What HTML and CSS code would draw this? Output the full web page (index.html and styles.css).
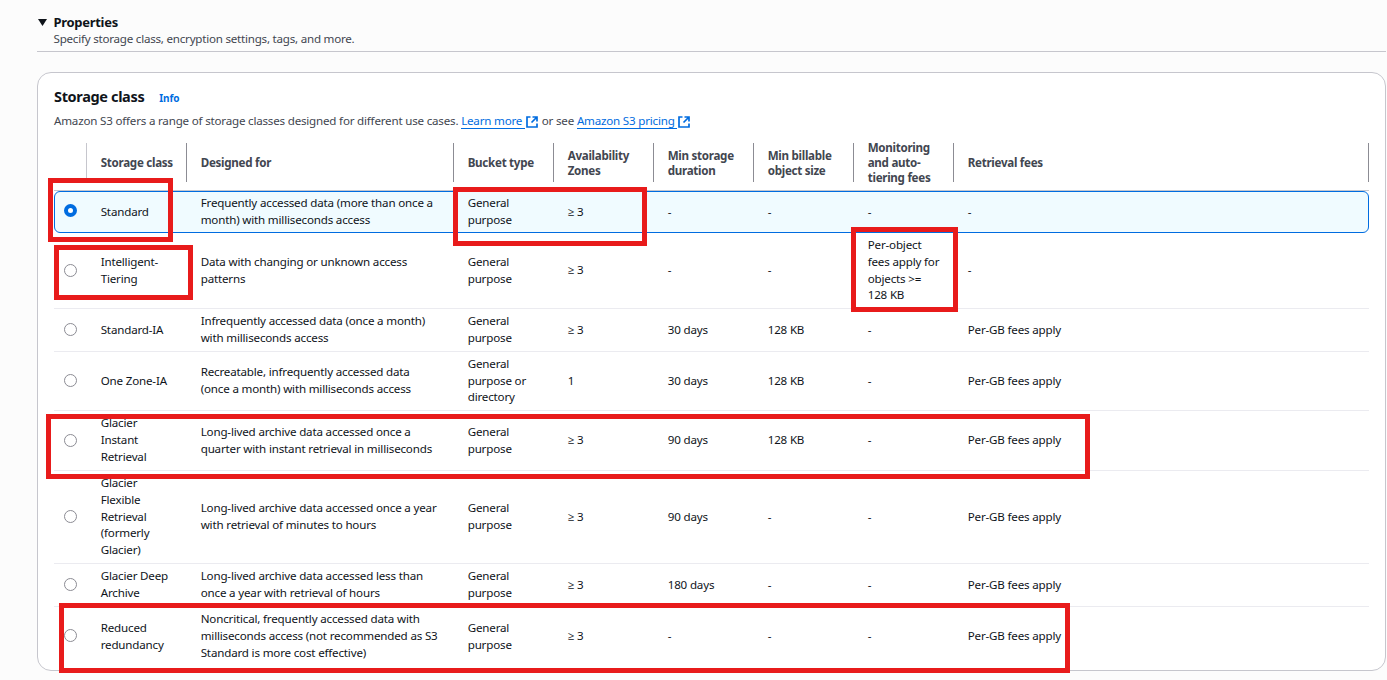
FILE: index.html
```html
<!DOCTYPE html>
<html lang="en">
<head>
<meta charset="utf-8">
<title>Storage class</title>
<link rel="stylesheet" href="styles.css">
</head>
<body>
<svg width="0" height="0" class="defs"><symbol id="external" viewBox="0 0 12 12"><path d="M4.500 1H1v10h10V7.500M6.500 1H11v4.500M11 1L5.500 6.500" fill="none" stroke="currentColor" stroke-width="1.700"/></symbol></svg>
<main class="page">
  <header class="section-head">
    <svg class="caret" viewBox="0 0 9 7"><path d="M0 0h9L4.500 7z"/></svg>
    <div>
      <h2 class="section-title">Properties</h2>
      <p class="section-desc">Specify storage class, encryption settings, tags, and more.</p>
    </div>
  </header>
  <section class="card">
    <div class="card-head"><h1 class="card-title">Storage class</h1><a class="info">Info</a></div>
    <p class="card-desc">Amazon S3 offers a range of storage classes designed for different use cases. <a class="link"><span>Learn more&nbsp;</span><svg><use href="#external"/></svg></a> or see <a class="link"><span>Amazon S3 pricing&nbsp;</span><svg><use href="#external"/></svg></a></p>
    <div class="table">
      <div class="row head">
        <div class="first"></div><div>Storage class</div><div>Designed for</div><div>Bucket type</div><div>Availability<br>Zones</div><div>Min storage<br>duration</div><div>Min billable<br>object size</div><div>Monitoring<br>and auto-<br>tiering fees</div><div>Retrieval fees</div>
      </div>
      <div class="row selected">
        <i class="radio on"></i><div>Standard</div><div>Frequently accessed data (more than once a<br>month) with milliseconds access</div><div>General<br>purpose</div><div>≥ 3</div><div>-</div><div>-</div><div>-</div><div>-</div>
      </div>
      <div class="row r2">
        <i class="radio"></i><div>Intelligent-<br>Tiering</div><div>Data with changing or unknown access<br>patterns</div><div>General<br>purpose</div><div>≥ 3</div><div>-</div><div>-</div><div>Per-object<br>fees apply for<br>objects &gt;=<br>128 KB</div><div>-</div>
      </div>
      <div class="row r3">
        <i class="radio"></i><div>Standard-IA</div><div>Infrequently accessed data (once a month)<br>with milliseconds access</div><div>General<br>purpose</div><div>≥ 3</div><div>30 days</div><div>128 KB</div><div>-</div><div>Per-GB fees apply</div>
      </div>
      <div class="row r4">
        <i class="radio"></i><div>One Zone-IA</div><div>Recreatable, infrequently accessed data<br>(once a month) with milliseconds access</div><div>General<br>purpose or<br>directory</div><div>1</div><div>30 days</div><div>128 KB</div><div>-</div><div>Per-GB fees apply</div>
      </div>
      <div class="row r5">
        <i class="radio"></i><div>Glacier<br>Instant<br>Retrieval</div><div>Long-lived archive data accessed once a<br>quarter with instant retrieval in milliseconds</div><div>General<br>purpose</div><div>≥ 3</div><div>90 days</div><div>128 KB</div><div>-</div><div>Per-GB fees apply</div>
      </div>
      <div class="row r6">
        <i class="radio"></i><div>Glacier<br>Flexible<br>Retrieval<br>(formerly<br>Glacier)</div><div>Long-lived archive data accessed once a year<br>with retrieval of minutes to hours</div><div>General<br>purpose</div><div>≥ 3</div><div>90 days</div><div>-</div><div>-</div><div>Per-GB fees apply</div>
      </div>
      <div class="row r7">
        <i class="radio"></i><div>Glacier Deep<br>Archive</div><div>Long-lived archive data accessed less than<br>once a year with retrieval of hours</div><div>General<br>purpose</div><div>≥ 3</div><div>180 days</div><div>-</div><div>-</div><div>Per-GB fees apply</div>
      </div>
      <div class="row r8">
        <i class="radio"></i><div>Reduced<br>redundancy</div><div>Noncritical, frequently accessed data with<br>milliseconds access (not recommended as S3<br>Standard is more cost effective)</div><div>General<br>purpose</div><div>≥ 3</div><div>-</div><div>-</div><div>-</div><div>Per-GB fees apply</div>
      </div>
    </div>
  </section>
</main>
<div class="mark mark-standard"></div>
<div class="mark mark-tiering"></div>
<div class="mark mark-zones"></div>
<div class="mark mark-fees"></div>
<div class="mark mark-instant"></div>
<div class="mark mark-reduced"></div>
</body>
</html>
```
FILE: styles.css
```css
* { box-sizing: border-box; }
body { margin: 0; height: 680px; overflow: hidden; background: #fcfcfc; font: 11.600px/16.8px "Noto Sans", "Open Sans", sans-serif; color: #0f141a; letter-spacing: -0.18px; }
h1, h2, p { margin: 0; }
.defs { display: block; }
.page { padding: 14px 1px 0 37px; }
.section-head { display: flex; height: 38px; border-bottom: 1px solid #c6c6cd; }
.caret { width: 9px; height: 7px; margin: 5px 6.500px 0 1px; fill: #0f141a; }
.section-title { font-size: 13px; line-height: 17px; font-weight: 700; letter-spacing: -0.3px; }
.section-desc { line-height: 16px; color: #424650; letter-spacing: -0.23px; }
.card { height: 599px; margin-top: 20px; padding: 14px 16px 0; background: #fff; border: 1px solid #c6c6cd; border-radius: 14px; }
.card-head { display: flex; align-items: baseline; height: 25px; }
.card-title { font-size: 14.500px; line-height: 18px; letter-spacing: -0.35px; }
.info { margin-left: 15px; color: #006ce0; font-size: 10px; font-weight: 700; letter-spacing: -0.1px; }
.card-desc { height: 29px; line-height: 18px; color: #424650; white-space: nowrap; letter-spacing: -0.2px; }
.link { color: #006ce0; margin-right: 1px; }
.link span { border-bottom: 1px solid #006ce0; }
.link svg { width: 12px; height: 12px; margin-left: 1px; vertical-align: -3px; }
.row { display: grid; grid-template-columns: 33px 100px 267px repeat(5, 100px) 1fr; align-items: center; border-bottom: 1px solid #ebebf0; white-space: nowrap; }
.row > div { padding: 0.2px 0 0 13.700px; }
.head { height: 50px; padding: 2px 0 9px; border-bottom-color: #c6c6cd; color: #424650; font-weight: 700; line-height: 15px; letter-spacing: -0.28px; }
.head > div { display: flex; align-items: center; height: 39px; border-right: 1px solid #8c8c94; }
.row.head > div { padding-top: 0; }
.head > .first { border-color: #c6c6cd; }
.selected { height: 42px; background: #f0fbff; border: 1px solid #006ce0; border-radius: 6px; grid-template-columns: 32px 100px 267px repeat(5, 100px) 1fr; }
.r2 { height: 76px; }
.r3, .r7 { height: 43px; }
.r4 { height: 59px; }
.r5 { height: 60px; }
.r6 { height: 93px; }
.r8 { height: 59px; border: 0; }
.radio { width: 13px; height: 13px; margin: 0 0 1px 10px; border: 1px solid #8c8c94; border-radius: 50%; background: #fff; }
.selected .radio { margin: 0 0 3px 9px; }
.r8 .radio { margin-bottom: 2px; }
.radio.on { border: 4px solid #006ce0; }
.mark { position: absolute; border: 5px solid #e81b1b; }
.mark-standard { left: 48px; top: 178px; width: 125px; height: 64px; }
.mark-tiering { left: 54px; top: 245px; width: 139px; height: 55px; }
.mark-zones { left: 453px; top: 187px; width: 194px; height: 59px; }
.mark-fees { left: 851px; top: 227px; width: 107px; height: 85px; }
.mark-instant { left: 46px; top: 414px; width: 1044px; height: 65px; }
.mark-reduced { left: 59px; top: 603px; width: 1011px; height: 70px; }
```
